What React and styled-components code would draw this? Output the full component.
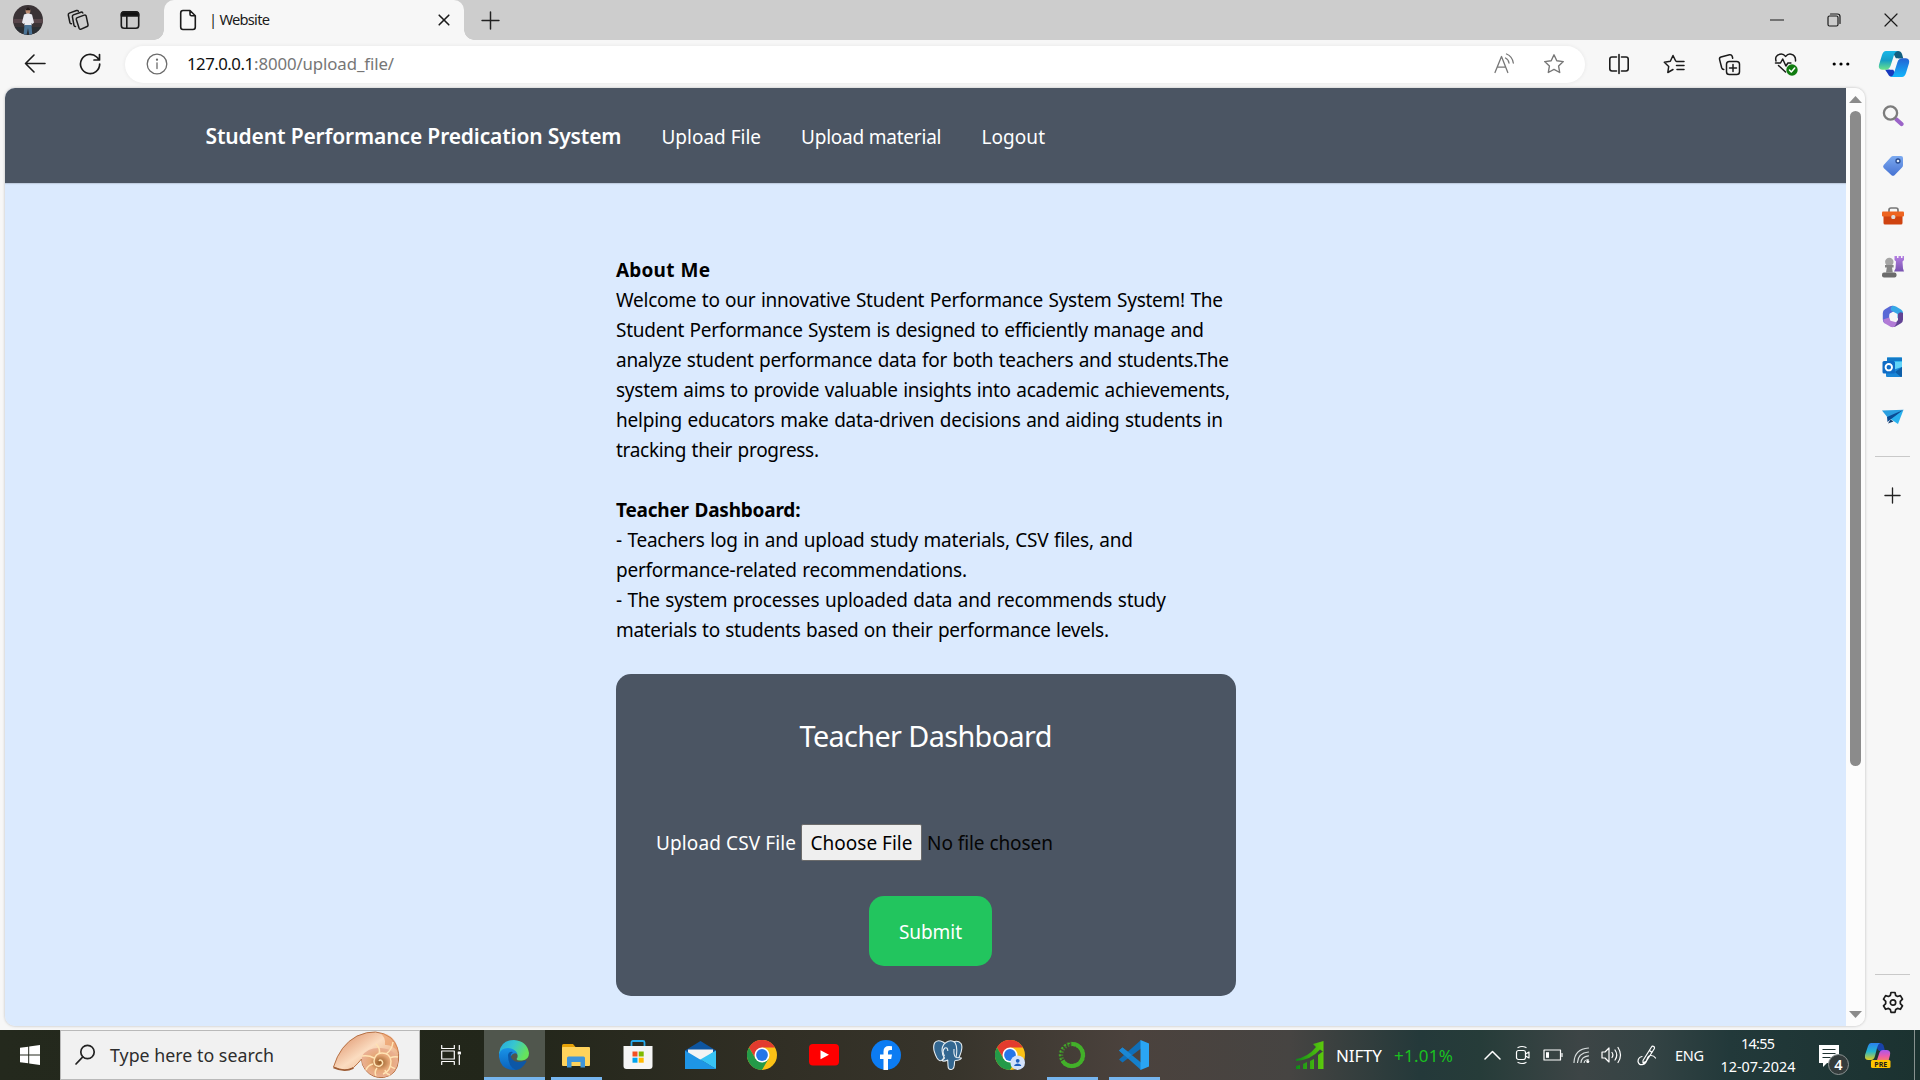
import React, { useLayoutEffect, useRef, useState } from "react";
import styled, { createGlobalStyle } from "styled-components";

const Global = createGlobalStyle`
  * { box-sizing: border-box; }
  html, body { margin: 0; height: 100%; overflow: hidden; }
  body { font-family: "Noto Sans", "Open Sans", sans-serif; background: #f7f7f7; }
  svg { display: block; flex: none; }
`;

/* ---------- shared parts ---------- */
const Track = styled.span`
  display: inline-block;
  white-space: pre;
  width: ${(p) => p.$w}px;
  overflow: visible;
`;

/* Text tracked so that it fills exactly the given width. */
function Fit({ w, children }) {
  const ref = useRef(null);
  const [spacing, setSpacing] = useState(0);
  useLayoutEffect(() => {
    const natural = ref.current.getBoundingClientRect().width;
    setSpacing((w - natural) / Math.max(1, children.length - 1));
  }, []);
  return (
    <Track $w={w}>
      <span ref={ref} style={{ letterSpacing: `${spacing}px` }}>{children}</span>
    </Track>
  );
}

const Slot = styled.div`
  display: flex;
  flex: none;
  align-items: center;
  justify-content: center;
  width: ${(p) => p.$w}px;
  height: 100%;
  margin-left: ${(p) => p.$ml || 0}px;
`;
const Spacer = styled.div`flex: 1;`;

/* ---------- frame ---------- */
const Screen = styled.div`
  width: 1920px;
  height: 1080px;
  display: flex;
  flex-direction: column;
  overflow: hidden;
  background: #f7f7f7;
`;
const TabBar = styled.div`
  flex: none;
  display: flex;
  height: 40px;
  background: #cdcdcd;
`;
const Avatar = styled.div`
  width: 30px;
  height: 30px;
  border-radius: 50%;
  overflow: hidden;
`;
const Tab = styled.div`
  position: relative;
  display: flex;
  align-items: center;
  width: 300px;
  height: 40px;
  margin-left: 3px;
  padding-left: 15px;
  background: #f7f7f7;
  border-radius: 10px 10px 0 0;
  font-size: 14.7px;
  color: #1b1b1b;
  &::before, &::after {
    content: "";
    position: absolute;
    bottom: 0;
    width: 10px;
    height: 10px;
  }
  &::before { left: -10px; background: radial-gradient(circle at 0 0, #cdcdcd 9.5px, #f7f7f7 10px); }
  &::after { right: -10px; background: radial-gradient(circle at 100% 0, #cdcdcd 9.5px, #f7f7f7 10px); }
`;
const TabTitle = styled.div`flex: 1; padding-left: 12px; line-height: 38px; height: 40px;`;
const Toolbar = styled.div`
  flex: none;
  display: flex;
  align-items: center;
  height: 48px;
`;
const Address = styled.div`
  display: flex;
  align-items: center;
  width: 1460px;
  height: 37px;
  margin: 0 6px 0 15px;
  padding-right: 6px;
  border-radius: 19px;
  background: #fff;
  box-shadow: 0 0 4px rgba(0, 0, 0, 0.07);
  font-size: 16.8px;
  color: #111;
`;
const Url = styled.div`padding-bottom: 2px;`;
const Muted = styled.span`color: #767676;`;
const Middle = styled.div`
  flex: none;
  display: flex;
  height: 942px;
  padding-left: 5px;
`;
const Viewport = styled.div`
  display: flex;
  width: 1860px;
  height: 938px;
  border-radius: 10px;
  overflow: hidden;
  box-shadow: 0 0 3px rgba(0, 0, 0, 0.25);
`;

/* ---------- web page ---------- */
const Page = styled.div`
  width: 1841px;
  background: #dbeafe;
`;
const Nav = styled.nav`
  display: flex;
  align-items: center;
  gap: 40px;
  height: 95px;
  padding: 2px 0 0 200.500px;
  background: #4b5563;
  box-shadow: 0 1px 1px rgba(0, 0, 0, 0.12);
  color: #fff;
  font-size: 19px;
`;
const Brand = styled.div`
  font-size: 21px;
  font-weight: 600;
  padding-bottom: 2px;
`;
const Content = styled.main`
  width: 620px;
  margin: 72px 0 0 611px;
`;
const Line = styled.p`
  margin: 0;
  height: 30px;
  line-height: 30px;
  font-size: 19px;
  word-spacing: 0.8px;
  font-weight: ${(p) => (p.$bold ? 700 : 400)};
  color: #000;
`;
const Card = styled.section`
  display: flex;
  flex-direction: column;
  align-items: center;
  height: 322px;
  margin-top: 29px;
  padding: 39px 40px 0;
  border-radius: 15px;
  background: #4b5563;
  color: #fff;
  font-size: 19px;
`;
const CardTitle = styled.div`
  height: 45px;
  line-height: 45px;
  font-size: 28.8px;
`;
const FileRow = styled.div`
  display: flex;
  align-items: center;
  align-self: stretch;
  height: 37px;
  margin-top: 66px;
`;
const Choose = styled.div`
  display: flex;
  align-items: center;
  justify-content: center;
  width: 121px;
  height: 37px;
  margin: 0 5px;
  border: 1px solid #6b6b6b;
  border-radius: 2px;
  background: #efefef;
  color: #000;
`;
const NoFile = styled.span`color: #050505;`;
const Submit = styled.div`
  display: flex;
  align-items: center;
  justify-content: center;
  width: 123px;
  height: 70px;
  margin: 35px 0 0 9px;
  padding-top: 2px;
  border-radius: 15px;
  background: #22c55e;
`;
const Scroll = styled.div`
  display: flex;
  flex-direction: column;
  align-items: center;
  width: 19px;
  padding: 8px 0 8px;
  background: #fcfcfc;
`;
const Thumb = styled.div`
  width: 11px;
  height: 655px;
  margin-top: 8px;
  border-radius: 6px;
  background: #8b8b8b;
`;

/* ---------- sidebar ---------- */
const Side = styled.aside`
  display: flex;
  flex-direction: column;
  align-items: center;
  width: 55px;
  padding-top: 3px;
`;
const SideSlot = styled.div`
  display: flex;
  align-items: center;
  justify-content: center;
  height: ${(p) => p.$h || 50.2}px;
`;
const Rule = styled.div`
  width: 35px;
  height: 1px;
  margin: ${(p) => p.$m};
  background: #c9c9c9;
`;

/* ---------- taskbar ---------- */
const Taskbar = styled.div`
  flex: none;
  display: flex;
  height: 50px;
  background: linear-gradient(90deg, #24291d 0, #22261a 500px, #302e24 760px, #37342b 950px, #4b423d 1130px, #464442 1290px, #24393a 1420px, #263c39 1480px, #3d4546 1580px, #344344 1650px, #22393a 1730px, #1b3230 1920px);
  color: #fff;
`;
const Search = styled.div`
  display: flex;
  align-items: center;
  width: 360px;
  height: 50px;
  padding-left: 13px;
  border: 1px solid #b9b9b9;
  background: #f1f1f1;
  color: #2d2d2d;
  font-size: 17.8px;
`;
const SearchText = styled.div`flex: 1; padding-left: 14px;`;
const AppCell = styled.div`
  display: flex;
  align-items: center;
  justify-content: center;
  width: ${(p) => (p.$active ? 61 : 51)}px;
  height: 50px;
  margin: 0 ${(p) => (p.$active ? 0.5 : 5.5)}px;
  background: ${(p) => (p.$active ? "#50564d" : "transparent")};
  box-shadow: ${(p) => (p.$open ? "inset 0 -3px 0 #76b5ee" : "none")};
`;
const Ticker = styled.div`
  display: flex;
  align-items: center;
  gap: 12px;
  margin-left: 4px;
  font-size: 17px;
`;
const Gain = styled.span`color: #19c11f;`;
const Lang = styled.div`
  display: flex;
  align-items: center;
  margin-left: 8px;
  font-size: 14.5px;
`;
const Clock = styled.div`
  display: flex;
  flex-direction: column;
  align-items: center;
  width: 96px;
  margin-left: 6px;
  padding-top: 2px;
  font-size: 14.4px;
  line-height: 23px;
`;
const Peek = styled.div`
  width: 6px;
  margin-left: 14px;
  border-left: 1px solid #87918f;
`;

/* ---------- icons ---------- */
const S = ({ w, h = w, vb, sw = 1.4, c = "#1b1b1b", fill = "none", children }) => (
  <svg width={w} height={h} viewBox={vb || `0 0 ${w} ${h}`} fill={fill} stroke={c} strokeWidth={sw} strokeLinecap="round" strokeLinejoin="round">{children}</svg>
);
const Plain = ({ w, h = w, vb, children }) => (
  <svg width={w} height={h} viewBox={vb || `0 0 ${w} ${h}`}>{children}</svg>
);

const Portrait = () => (
  <Plain w={30}>
    <rect width="30" height="30" fill="#3a3336" />
    <rect y="14" width="30" height="4" fill="#57454a" />
    <rect y="22" width="30" height="8" fill="#2a2e33" />
    <ellipse cx="15" cy="6" rx="2.4" ry="3" fill="#b98a72" />
    <path d="M13 3.8q2-2.4 4 0v1.5h-4z" fill="#211a19" />
    <path d="M11 9.500l3-1h2l3 1 2 8-1.500 1.500-1-1 .2 2.500h-7.400l.2-2.500-1 1-1.500-1.500z" fill="#e8e9f0" />
    <path d="M11.5 20h7l.8 10h-3L15 23l-1.5 7h-3z" fill="#4a7396" />
  </Plain>
);
const Workspaces = () => (
  <S w={22} sw={1.5}>
    <path d="M10.500 8.500l7-2.300q1.500-.4 1.900 1l1.500 8.700q.2 1.300-1 1.800l-6 2.400q-1.500.5-2-1L9.400 10.300q-.2-1.300 1.100-1.800z" transform="rotate(-2 15 13)" />
    <path d="M8.500 17.500q-1.200.1-1.500-1.200L5.400 7.800q-.2-1.400 1-1.900l7.500-2.700q1.300-.4 1.900.8" />
    <path d="M4.500 14.700q-1.300.2-1.600-1.100L1.300 6q-.2-1.400 1-1.900l7.200-2.600q1.400-.4 1.900.8" />
  </S>
);
const VerticalTabs = () => (
  <S w={20} sw={1.6}>
    <rect x="1.300" y="1.800" width="17.400" height="16.400" rx="2.800" />
    <path d="M1.500 6V4.200Q1.600 2 4 2h12q2.400 0 2.500 2.200V6z" fill="#111" />
    <path d="M6.800 6v12" />
  </S>
);
const Doc = () => (
  <S w={18} h={22} sw={1.6}><path d="M11 1.500H4Q1.700 1.500 1.700 4v14q0 2.500 2.300 2.500h10q2.300 0 2.300-2.500V6.700zM11 1.700v3.500q0 1.500 1.500 1.500h3.700" /></S>
);
const Back = () => <S w={22} sw={1.6}><path d="M21 10.500H1.500M10 2l-8.500 8.500L10 19" /></S>;
const Reload = () => <S w={22} sw={1.7}><path d="M20.700 11a9.600 9.600 0 1 1-3-7l2.700 2.800M20.500 1.500v5.500h-5.500" /></S>;
const Info = () => (
  <S w={22} sw={1.3} c="#6b6b6b"><circle cx="11" cy="11" r="9.800" /><path d="M11 9.800v5.700" /><circle cx="11" cy="6.700" r=".5" fill="#6b6b6b" /></S>
);
const ReadAloud = () => (
  <S w={22} c="#777" sw={1.3}><path d="M2 19.500L8.500 3.500l6.300 16M4.200 14.200h8.600M12.500 5q3 1.500 3.500 5M13.500 1q5.800 2.300 6.800 9" /></S>
);
const starPath = "M11 1.800l2.800 5.900 6.500.9-4.700 4.500 1.100 6.400-5.700-3.100-5.700 3.100 1.100-6.400L1.700 8.600l6.500-.9z";
const Star = () => <S w={22} c="#777"><path d={starPath} /></S>;
const Split = () => (
  <S w={22} sw={1.6}><path d="M8.500 4H4Q1.800 4 1.800 6.200v9.600Q1.800 18 4 18h4.500M13.500 4H18q2.200 0 2.200 2.200v9.600Q20.200 18 18 18h-4.500M11 1.500v19" /></S>
);
const Favs = () => (
  <S w={22} sw={1.5}><path d="M13.500 8.500h7.500M13.500 12.500h7.500M14 16.500h7M10 16.500l-5.200 3 .9-6L1.300 9.200l6-1L10 2.500l2.700 5.500" /></S>
);
const Collections = () => (
  <S w={23} sw={1.5}><rect x="8.500" y="8.500" width="13" height="13" rx="2.800" /><path d="M15 11.500v7M11.500 15h7M5.800 16.500q-1.600 0-2.100-1.700L1.600 6.600q-.5-2 1.400-2.600l8.500-2.300q2-.4 2.700 1.600l.5 2" /></S>
);
const Heart = () => (
  <S w={24} sw={1.5}>
    <path d="M2 9Q.5 3.500 6 2.200q3.500-.6 5.500 2.200Q14 1.600 17 2.200q5 1 4.500 6.800M4.500 13.500l7 6.500M1.500 11h5l2.200-4 3.200 7 2-3h3" />
    <circle cx="18" cy="18" r="5.700" fill="#107c10" stroke="none" /><path d="M15.500 18l1.800 1.900 3.400-3.800" stroke="#fff" />
  </S>
);
const Dots = () => <Plain w={18} h={6}><circle cx="2.200" cy="3" r="1.600" /><circle cx="9" cy="3" r="1.600" /><circle cx="15.800" cy="3" r="1.600" /></Plain>;
const Copilot = () => (
  <Plain w={32} h={28}>
    <defs>
      <linearGradient id="cpa" x1="0" y1="0" x2="0" y2="1"><stop stopColor="#17b7e8" /><stop offset=".5" stopColor="#169ec7" /><stop offset="1" stopColor="#6be48a" /></linearGradient>
      <linearGradient id="cpb" x1="0" y1="0" x2="0" y2="1"><stop stopColor="#2563d4" /><stop offset="1" stopColor="#12b5fb" /></linearGradient>
    </defs>
    <path d="M14 1h6q3 0 4 3l1.300 4.500H18z" fill="#125f80" />
    <path d="M7 19.500h8l5 7.500h-5q-4 0-5-3z" fill="#1638bd" />
    <path d="M8 1h12q-3 .5-4 4l-3.500 11q-1.300 3.700-5 3.700H4q-4-.5-3-5L4 5q1.300-4 4-4z" fill="url(#cpa)" />
    <path d="M24 27H12q3-.5 4-4l3.500-11q1.300-3.700 5-3.700H28q4 .5 3 5L28 23q-1.300 4-4 4z" fill="url(#cpb)" />
    <path d="M16.300 8.500h4.200q-2.200 1-3 3.500l-2.300 7.500H11.500q2-1 2.800-4z" fill="#f7f7f7" />
  </Plain>
);

const SideSearch = () => (
  <Plain w={22}>
    <path d="M14.500 14.500l5 4.500" stroke="#9b64c8" strokeWidth="4.200" strokeLinecap="round" />
    <circle cx="8.500" cy="8" r="6.600" fill="none" stroke="#7c7c7c" strokeWidth="2.300" />
  </Plain>
);
const Tag = () => (
  <Plain w={22}>
    <defs><linearGradient id="tg" x1="0" y1="0" x2="0" y2="1"><stop stopColor="#7caaf0" /><stop offset="1" stopColor="#4672d2" /></linearGradient></defs>
    <path d="M11 1h8q2 0 2 2v7q0 1.500-1 2.500l-7.500 7.700q-1.500 1.300-3 0L1.700 13q-1.200-1.500 0-3L9 2q1-1 2-1z" fill="url(#tg)" />
    <circle cx="16" cy="6" r="2" fill="#dce9fb" stroke="#294b8e" strokeWidth="1.3" />
  </Plain>
);
const Toolbox = () => (
  <Plain w={22} h={18}>
    <path d="M7 5V3q0-2 2-2h5q2 0 2 2v2" fill="none" stroke="#777" strokeWidth="1.7" />
    <path d="M1.500 8h19v8q0 1.500-1.500 1.500H3Q1.500 17.500 1.500 16z" fill="#cf4310" />
    <rect y="4.500" width="22" height="5" rx="1" fill="#ee6420" />
    <rect x="9.300" y="8" width="4" height="4" rx="1.500" fill="#ddd" />
  </Plain>
);
const Chess = () => (
  <Plain w={22} h={23}>
    <defs><linearGradient id="rk" x1="0" y1="0" x2="0" y2="1"><stop stopColor="#b57fe3" /><stop offset="1" stopColor="#7853b0" /></linearGradient></defs>
    <path d="M12.500 1h2.500v2h1.500V1h2.500v2h1.500V1H22v4l-1.500 1.500.5 7 1 3H12l1.500-3 .5-7L12.500 5z" fill="url(#rk)" />
    <circle cx="7.300" cy="7" r="4.200" fill="#a5a5a5" />
    <path d="M3 10h8.600v2.500H10l.8 5H4l.8-5H3z" fill="#858585" />
    <rect y="17.500" width="14.500" height="5" rx="2" fill="#6b6b6b" />
  </Plain>
);
const M365 = () => (
  <Plain w={22} h={23}>
    <path d="M11 .7l3.300 4-6.800 4v7L3 18.500Q.8 17.200.8 14.500V8Q.8 5.500 3 4.200L8 1.200q1.500-.7 3-.5z" fill="#5868d6" />
    <path d="M11 .7q1.500 0 3 .8l5 2.900Q21 5.600 21 8v7l-5.500-2V9L9 5.500Q8 2 11 .7z" fill="#36a7e6" />
    <path d="M21 8v6.500q0 2.500-2 3.700l-5.500 3.300q-2.500 1.200-5 0l5-3.500 2.500-3V9q2-3 5-1z" fill="#624394" />
    <path d="M3 18.500q-2-1.500-1.800-4L7 12.500l1.500 3.300 6.500 1.700-2.500 4.300q-2 .8-4 0z" fill="#b27bd6" />
    <circle cx="11" cy="11.500" r="3.700" fill="#f7f7f7" />
  </Plain>
);
const Outlook = () => (
  <Plain w={22} h={21}>
    <rect x="5" y=".5" width="15" height="13" rx="1" fill="#32b8ef" /><rect x="5" y=".5" width="15" height="3.500" fill="#1279c7" />
    <path d="M13 5h7v6l-7 3z" fill="#62d4f9" /><path d="M4 15l16-5v9q0 1-1 1H5q-1 0-1-1z" fill="#1a86d6" />
    <path d="M20 10l-7 5 6 5q1 0 1-1z" fill="#0d5ea8" />
    <rect x=".5" y="4" width="12.500" height="12.500" rx="1.500" fill="#0f6cc6" />
    <circle cx="6.800" cy="10.200" r="3.200" fill="none" stroke="#fff" strokeWidth="1.9" />
  </Plain>
);
const Plane = () => (
  <Plain w={22} h={16}>
    <path d="M0 1.500L21.500.8 6 9z" fill="#2a9fe0" /><path d="M21.500.8L16 15 7 9z" fill="#28b1ee" /><path d="M5 8L21.500.8 8.500 10.500 5.500 13z" fill="#0b4c94" /><path d="M8.500 10.500l3 2-5.500 2z" fill="#123b70" />
  </Plain>
);
const Plus = ({ w = 18, c = "#222" }) => <S w={w} vb="0 0 18 18" c={c}><path d="M9 1v16M1 9h16" /></S>;
const Gear = () => (
  <S w={22} h={23} sw={1.7}>
    <path d="M9 1.500h4l.7 3 1.800 1 2.900-.9 2.100 3.500-2.200 2.200v2.300l2.200 2.200-2.100 3.500-2.900-.9-1.800 1-.7 3H9l-.7-3-1.800-1-2.900.9-2.100-3.500 2.200-2.200v-2.300L1.500 8.100l2.100-3.500 2.900.9 1.800-1z" />
    <circle cx="11" cy="11.500" r="2.700" />
  </S>
);

const Windows = () => (
  <Plain w={20} h={20}><path d="M0 2.800L8.200 1.700v7.800H0zM9.200 1.500L20 0v9.500H9.200zM0 10.500h8.200v7.800L0 17.200zM9.200 10.500H20V20L9.200 18.500z" fill="#fff" /></Plain>
);
const Magnifier = () => <S w={22} sw={1.7} c="#222"><circle cx="13.500" cy="8" r="6.700" /><path d="M8.800 12.800L2 20" /></S>;
const Shell = () => (
  <Plain w={70} h={48}>
    <defs>
      <linearGradient id="sh" x1="0" y1="0" x2="1" y2="1"><stop offset=".1" stopColor="#e09770" /><stop offset=".45" stopColor="#fbdcc0" /><stop offset="1" stopColor="#dd8e59" /></linearGradient>
      <radialGradient id="sp"><stop stopColor="#965c25" /><stop offset=".55" stopColor="#e6a877" /><stop offset="1" stopColor="#eab093" /></radialGradient>
    </defs>
    <path d="M1.500 36Q8 14 25 5q20-9 34 2 9 9 7.500 22-1 15-15 17.500-11 1-18-7.500-4-5-4-11-3 4-8 8.500-7 5-20-.5z" fill="url(#sh)" stroke="#b67145" />
    <path d="M30 25q6-9 19-8 15 1 17 13-2 14-14 16-11 1-18-7-5-6-4-14z" fill="url(#sp)" />
    <path d="M53 14q1-8-5-12 16 1 18.500 19Q60 13 53 14z" fill="#e8935a" opacity=".6" />
    <path d="M1.500 36.500q11 5 20 .5" fill="none" stroke="#9c5c35" strokeWidth="1.5" />
    <path d="M47 30q1-2 3 0 2 3-2 5-6 1-6-5 1-8 8-8 8 0 9 8 0 10-8 13M47 23q2-5-3-10M54 23q6-4 7-12M58 27q4-2 8-1M58 35q4 3 5 2M53 39q1 4 5 5M45 37q-3 4-1 8M41 33q-5 1-7 6M42 27q-5-3-12-2" fill="none" stroke="#ffe3b3" strokeWidth="1.5" />
  </Plain>
);
const TaskView = () => (
  <S w={20} sw={1.2} c="#fff"><path d="M.7.500v3h12.600v-3M.7 19.500v-3h12.600v3M.7 6h12.600v8H.7zM18.300.500v4M18.300 10.500v9" /><rect x="17.300" y="7" width="2" height="2" fill="#fff" /></S>
);
const Edge = () => (
  <Plain w={30} h={30}>
    <defs>
      <linearGradient id="eg" x1="0" y1="0" x2="1" y2=".4"><stop stopColor="#24a8e0" /><stop offset=".5" stopColor="#37c6d0" /><stop offset="1" stopColor="#66e35b" /></linearGradient>
      <linearGradient id="eb" x1="0" y1="0" x2="0" y2="1"><stop stopColor="#1993e8" /><stop offset="1" stopColor="#0b62bd" /></linearGradient>
    </defs>
    <path d="M0 13Q2 0 15 0q13 1 15 13 0 7-7 7.500-5 .5-5.500-1.500 1.500-1.500 1-4-1-4-6-4.500Q5 10 0 15z" fill="url(#eg)" />
    <path d="M0 14q2-6 9-6 7 .5 9.500 6-4-2-6.500 2-1.500 4 2 8 4 4 10 1-4 5-9.500 5Q2 30 0 17z" fill="url(#eb)" />
    <path d="M9 15q1-4 5-3-4 3-1 7 4 5 14 1.500.8 0 .2 1.500-4 7-10.200 8Q9 27 9 15z" fill="#0d57a6" />
  </Plain>
);
const Explorer = () => (
  <Plain w={28} h={26}>
    <path d="M0 3.500Q0 2 1.500 2H11l2.500 3v3H0z" fill="#e6a208" /><rect y="5" width="28" height="19" rx="1" fill="#ffd35c" />
    <path d="M5 25.500V16q0-1.500 1.500-1.500h15q1.500 0 1.500 1.500v9.500h-4.500V20h-9v5.500z" fill="#3f95da" />
  </Plain>
);
const Store = () => (
  <Plain w={30} h={30}>
    <path d="M8.500 7V2.500Q8.500 1 10 1h10q1.500 0 1.500 1.500V7" fill="none" stroke="#26a8ea" strokeWidth="1.8" />
    <path d="M.5 6h29v20q0 3-3 3h-23q-3 0-3-3z" fill="#f5f5f5" />
    <path d="M9.500 11.500h5v5h-5z" fill="#f25022" /><path d="M15.700 11.500h5v5h-5z" fill="#7fba00" /><path d="M9.500 17.700h5v5h-5z" fill="#00a4ef" /><path d="M15.700 17.700h5v5h-5z" fill="#ffb900" />
  </Plain>
);
const Mail = () => (
  <Plain w={31} h={30}>
    <path d="M0 10.500L15.500 1 31 10.500V16H0z" fill="#0d55a0" />
    <path d="M3 9.500h25v3L16 21 3 13z" fill="#f4f4f4" />
    <path d="M0 10.500L31 29H0z" fill="#1f95e6" />
    <path d="M31 10.500V29L15.300 19.600z" fill="#38c4f5" />
    <path d="M0 29l15.300-9.400L31 29z" fill="#1e96e6" />
  </Plain>
);
const Chrome = ({ badge }) => (
  <Plain w={30} h={30}>
    <circle cx="15" cy="15" r="15" fill="#fbc116" />
    <path d="M2 7.500A15 15 0 0 1 28 7.500H15L8.500 18.700z" fill="#e33b2e" />
    <path d="M2 7.500A15 15 0 0 0 15 30l6.500-11.300-13 0z" fill="#249a48" />
    <circle cx="15" cy="15" r="7.500" fill="#fff" /><circle cx="15" cy="15" r="5.900" fill="#2676e8" />
    {badge && <><circle cx="22.700" cy="22.700" r="7.300" fill="#d3e2fb" /><circle cx="22.700" cy="20.800" r="1.900" fill="#1c5fc0" /><path d="M19.300 26v-1q3.400-3 6.800 0v1z" fill="#1c5fc0" /></>}
  </Plain>
);
const YouTube = () => <Plain w={30} h={22}><rect width="30" height="21.500" rx="4" fill="#f00" /><path d="M11.500 6.300v9L20 10.800z" fill="#fff" /></Plain>;
const Facebook = () => (
  <Plain w={30}><circle cx="15" cy="15" r="15" fill="#0c7cf3" /><path d="M12.500 30V19H9v-4.500h3.500v-3Q12.500 6 18 6q1.800 0 3 .3v3.800h-1.800q-2.200 0-2.200 2v2.400h4l-.8 4.500H17v11z" fill="#fff" /></Plain>
);
const Postgres = () => (
  <Plain w={30}>
    <g fill="#336791" stroke="#e6edf2" strokeWidth="1.1" strokeLinejoin="round">
      <path d="M10 2Q4-1 1.500 3-1 9 4 18q3 5 6 1l3-5V4z" /><path d="M20 2q5-2 8 1.500 2.500 4-2 14l-4 2-5-3z" />
      <path d="M13 2.500q5-3.500 9 0 3 5 1 15l5.500.5q-1.500 2.500-6 2.500-1 0-1 2 0 6-2.500 6.800-4 1-4-3.800l-.3-5.500q-4 2-5.700.5l2.500-2.500Q8 13 9.500 7q.8-3 3.500-4.500z" />
      <path d="M11.500 16q-3-5 .3-8 3-1 3 3M22.500 17q-2-2-1.500-8" fill="none" />
    </g>
  </Plain>
);
const Anaconda = () => (
  <Plain w={28} h={28}>
    <circle cx="14" cy="14" r="11" fill="none" stroke="#43b02a" strokeWidth="4" strokeDasharray="46 24" transform="rotate(-92 14 14)" />
    <circle cx="14" cy="14" r="11" fill="none" stroke="#43b02a" strokeWidth="4.5" strokeDasharray="1.800 1.500" pathLength="68" opacity=".55" />
    <circle cx="14" cy="14" r="12" fill="none" stroke="#43b02a" strokeWidth="1.5" strokeDasharray="2 2" />
  </Plain>
);
const VSCode = () => (
  <Plain w={30}>
    <path d="M0 10.500L3.500 7.500 22 22.500V30z" fill="#1580cc" /><path d="M0 19.500L22 0v8.500L3.500 22.500z" fill="#0f6fb9" /><path d="M0 10.500L3.500 7.500 13 15l-4 3.500z" fill="#1b87d4" /><path d="M21.500 0L30 3.500v23L21.500 30z" fill="#2aa5f3" />
  </Plain>
);
const Chart = () => (
  <Plain w={28} h={28}>
    <defs><linearGradient id="gr"><stop stopColor="#0d8a18" /><stop offset="1" stopColor="#5ecb0c" /></linearGradient></defs>
    <path d="M0 18q12-2 20-12l-3-3L27.500 0v11l-3.500-2.500Q15 19 0 20zM0 28v-3l4-1v4zM7 28v-5l4-2v7zM14 28v-8l4-2v10zM22 28V14l5.500-4v18z" fill="url(#gr)" />
  </Plain>
);
const Chevron = () => <S w={17} h={10} c="#fff" sw={1.5}><path d="M1 9l7.500-7.500L16 9" /></S>;
const Camera = () => <S w={17} h={20} c="#fff" sw={1.2}><rect x="2.500" y="5.500" width="9" height="9" rx="2" /><path d="M11.500 9l3.500-2v6l-3.500-2M4 2.500q4-2 8 0M4 17.500q4 2 8 0" /></S>;
const Battery = () => <S w={20} h={12} c="#fff" sw={1.2}><rect x="1" y="1" width="16.500" height="10" /><path d="M19 4.500v3" /><rect x="3" y="3.200" width="3" height="5.600" fill="#fff" stroke="none" /></S>;
const Wifi = () => (
  <S w={18} h={18} c="#d9dfdf" sw={1.2}><path d="M1 16.500Q1.500 3 15.500 2M4.500 16.500Q5 7 15.500 6M8 16.500q.5-6 7.500-6.700M11.200 16.500q.3-2.500 4-3" /><circle cx="14.800" cy="15.500" r="1.500" fill="#fff" stroke="none" /></S>
);
const Sound = () => <S w={22} h={18} c="#fff" sw={1.2}><path d="M1 6h3l4-4v14l-4-4H1zM11 6.500q1.800 2.500 0 5M14 4q3.500 5 0 10M17 1.500q5 7.500 0 15" /></S>;
const Pen = () => (
  <S w={21} h={21} c="#fff" sw={1.2}><path d="M6 15.500L14.500 2q1-1.500 2.300-.5 1.200 1 .3 2.500L9.500 16 6 18zM5 11.500q-4 1-4 5 1 4 5 3 3-1 4-5t4-4q3 0 4.500 2.500M12.500 5.500l2.500 2" /></S>
);
const Note = () => (
  <Plain w={40} h={50}>
    <path d="M8 15h20v18H16l-4 4v-4H8z" fill="#fff" />
    <path d="M11.500 19.500h13M11.500 23.500h13M11.500 27.500h8" stroke="#203331" strokeWidth="1.2" />
    <circle cx="27.500" cy="34.500" r="10" fill="#343c3c" stroke="#8b9292" />
    <text x="27.500" y="40" textAnchor="middle" fontSize="14.5" fontWeight="600" fontFamily="Noto Sans, sans-serif" fill="#fff">4</text>
  </Plain>
);
const CopilotPre = () => (
  <Plain w={26} h={25}>
    <defs>
      <linearGradient id="ca" x1="0" y1="0" x2="0" y2="1"><stop stopColor="#2b80ee" /><stop offset=".5" stopColor="#24b6cf" /><stop offset="1" stopColor="#e1ce1e" /></linearGradient>
      <linearGradient id="cb" x1="0" y1="0" x2="0" y2="1"><stop stopColor="#aa57ed" /><stop offset=".5" stopColor="#ee5ca7" /><stop offset="1" stopColor="#f79644" /></linearGradient>
    </defs>
    <path d="M8 0h7q3 0 4 4l1 4h-6z" fill="#1942aa" />
    <path d="M6 0h9q-2 1-3 5l-2 8q-1 4-4 4H3q-4-.5-3-5L3 3q1-3 3-3z" fill="url(#ca)" />
    <path d="M18 7h4q4 .5 3 5l-2 8H11l3-9q1-4 4-4z" fill="url(#cb)" />
    <rect x="6" y="17" width="19.500" height="8" rx="1.500" fill="#ffc400" />
    <text x="15.800" y="23.600" textAnchor="middle" fontSize="7" fontWeight="700" fontFamily="Noto Sans, sans-serif" fill="#1b1b1b">PRE</text>
  </Plain>
);

/* ---------- data ---------- */
const COPY = [
  ["About Me", 94, true],
  ["Welcome to our innovative Student Performance System System! The", 607],
  ["Student Performance System is designed to efficiently manage and", 588],
  ["analyze student performance data for both teachers and students.The", 613],
  ["system aims to provide valuable insights into academic achievements,", 614],
  ["helping educators make data-driven decisions and aiding students in", 607],
  ["tracking their progress.", 203],
  null,
  ["Teacher Dashboard:", 184.5, true],
  ["- Teachers log in and upload study materials, CSV files, and", 517],
  ["performance-related recommendations.", 351],
  ["- The system processes uploaded data and recommends study", 550],
  ["materials to students based on their performance levels.", 493],
];
const APPS = [
  { icon: <Edge />, active: true, open: true },
  { icon: <Explorer />, open: true },
  { icon: <Store /> },
  { icon: <Mail /> },
  { icon: <Chrome /> },
  { icon: <YouTube /> },
  { icon: <Facebook /> },
  { icon: <Postgres /> },
  { icon: <Chrome badge /> },
  { icon: <Anaconda />, open: true },
  { icon: <VSCode />, open: true },
];
const SIDE = [SideSearch, Tag, Toolbox, Chess, M365, Outlook, Plane];

export default function App() {
  return (
    <Screen>
      <Global />
      <TabBar>
        <Slot $w={56}><Avatar><Portrait /></Avatar></Slot>
        <Slot $w={43}><Workspaces /></Slot>
        <Slot $w={62}><VerticalTabs /></Slot>
        <Tab>
          <Doc />
          <TabTitle><Fit w={61}>| Website</Fit></TabTitle>
          <Slot $w={40}><S w={12} sw={1.6}><path d="M1.200 1.200l9.600 9.600M10.800 1.200l-9.600 9.600" /></S></Slot>
        </Tab>
        <Slot $w={53}><Plus w={19} /></Slot>
        <Spacer />
        <Slot $w={57}><S w={14} sw={1.2} h={2}><path d="M.5 1h13" /></S></Slot>
        <Slot $w={57}><S w={14} sw={1.2}><rect x="1" y="3" width="10" height="10" rx="1.500" /><path d="M3.500 1h7Q13 1 13 3.500v7" /></S></Slot>
        <Slot $w={58}><S w={14} sw={1.2}><path d="M1 1l12 12M13 1L1 13" /></S></Slot>
      </TabBar>
      <Toolbar>
        <Slot $w={70}><Back /></Slot>
        <Slot $w={40}><Reload /></Slot>
        <Address>
          <Slot $w={60} $ml={2}><Info /></Slot>
          <Url><Fit w={67}>127.0.0.1</Fit><Muted><Fit w={140}>:8000/upload_file/</Fit></Muted></Url>
          <Spacer />
          <Slot $w={50}><ReadAloud /></Slot>
          <Slot $w={50}><Star /></Slot>
        </Address>
        <Slot $w={55}><Split /></Slot>
        <Slot $w={56}><Favs /></Slot>
        <Slot $w={55}><Collections /></Slot>
        <Slot $w={57}><Heart /></Slot>
        <Slot $w={53}><Dots /></Slot>
        <Slot $w={53}><Copilot /></Slot>
      </Toolbar>
      <Middle>
        <Viewport>
          <Page>
            <Nav>
              <Brand><Fit w={416}>Student Performance Predication System</Fit></Brand>
              <Fit w={99.5}>Upload File</Fit>
              <Fit w={140.5}>Upload material</Fit>
              <Fit w={63.5}>Logout</Fit>
            </Nav>
            <Content>
              {COPY.map((l, i) => (
                <Line key={i} $bold={l && l[2]}>{l && <Fit w={l[1]}>{l[0]}</Fit>}</Line>
              ))}
              <Card>
                <CardTitle><Fit w={253}>Teacher Dashboard</Fit></CardTitle>
                <FileRow>
                  <Fit w={140}>Upload CSV File</Fit>
                  <Choose><Fit w={102}>Choose File</Fit></Choose>
                  <NoFile><Fit w={126}>No file chosen</Fit></NoFile>
                </FileRow>
                <Submit><Fit w={63}>Submit</Fit></Submit>
              </Card>
            </Content>
          </Page>
          <Scroll>
            <Plain w={13} h={7}><path d="M6.500 0L13 7H0z" fill="#8b8b8b" /></Plain>
            <Thumb />
            <Spacer />
            <Plain w={13} h={7}><path d="M6.500 7L13 0H0z" fill="#8b8b8b" /></Plain>
          </Scroll>
        </Viewport>
        <Side>
          {SIDE.map((Icon, i) => <SideSlot key={i}><Icon /></SideSlot>)}
          <Rule $m="14px 0 13px" />
          <SideSlot><Plus w={17} /></SideSlot>
          <Spacer />
          <Rule $m="0" />
          <SideSlot $h={55}><Gear /></SideSlot>
        </Side>
      </Middle>
      <Taskbar>
        <Slot $w={60}><Windows /></Slot>
        <Search>
          <Magnifier />
          <SearchText><Fit w={164}>Type here to search</Fit></SearchText>
          <Slot $w={104}><Shell /></Slot>
        </Search>
        <Slot $w={61}><TaskView /></Slot>
        <Slot $w={2} />
        {APPS.map((a, i) => (
          <AppCell key={i} $active={a.active} $open={a.open}>{a.icon}</AppCell>
        ))}
        <Spacer />
        <Slot $w={44}><Chart /></Slot>
        <Ticker>
          <Fit w={46}>NIFTY</Fit>
          <Gain><Fit w={59}>+1.01%</Fit></Gain>
        </Ticker>
        <Slot $w={30} $ml={24}><Chevron /></Slot>
        <Slot $w={31}><Camera /></Slot>
        <Slot $w={29}><Battery /></Slot>
        <Slot $w={30}><Wifi /></Slot>
        <Slot $w={30}><Sound /></Slot>
        <Slot $w={40}><Pen /></Slot>
        <Lang><Fit w={29}>ENG</Fit></Lang>
        <Clock><Fit w={34}>14:55</Fit><Fit w={75}>12-07-2024</Fit></Clock>
        <Slot $w={50}><Note /></Slot>
        <Slot $w={44}><CopilotPre /></Slot>
        <Peek />
      </Taskbar>
    </Screen>
  );
}
